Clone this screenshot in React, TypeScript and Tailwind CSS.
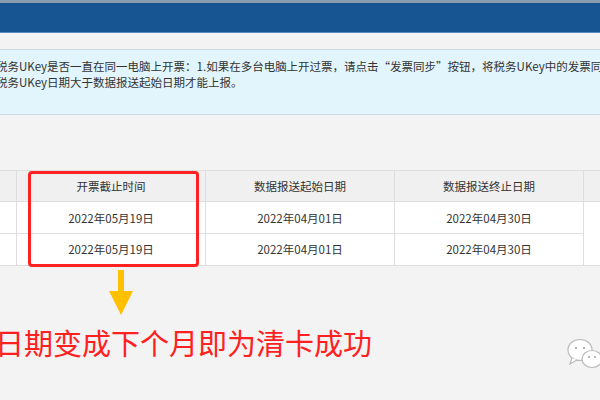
export default function App() {
  const font = { fontFamily: '"Noto Sans CJK SC", "Liberation Sans", sans-serif' };
  const cols = ["开票截止时间", "数据报送起始日期", "数据报送终止日期"];
  const rows = [
    ["2022年05月19日", "2022年04月01日", "2022年04月30日"],
    ["2022年05月19日", "2022年04月01日", "2022年04月30日"],
  ];
  return (
    <div className="w-[600px] h-[400px] overflow-hidden bg-[#f3f3f3] relative" style={font}>
      <div className="h-[3px] bg-[#8a9bb0]" />
      <div className="h-[30px] bg-[#175592] border-b border-[#5b8abd]" />
      <div className="h-[16px]" />
      <div className="h-[66px] bg-[#e2f5fc] border-y border-[#c7dbe8] pt-[8px] text-[11.5px] leading-[16px] text-[#333] whitespace-nowrap -ml-[4px]">
        <div>税务UKey是否一直在同一电脑上开票：1.如果在多台电脑上开过票，请点击“发票同步”按钮，将税务UKey中的发票同步</div>
        <div>税务UKey日期大于数据报送起始日期才能上报。</div>
      </div>
      <div className="h-[55px]" />
      <div className="flex -ml-[2px] bg-white">
        <div className="w-[19px] border border-[#dedede]">
          <div className="h-[31px] bg-[#f0f0f0] border-b border-[#dedede]" />
          <div className="h-[32px] border-b border-[#dedede]" />
          <div className="h-[31px]" />
        </div>
        {cols.map((c, i) => (
          <div key={c} className="w-[189px] border-y border-r border-[#dedede] text-[11.5px] text-[#333] text-center">
            <div className="h-[31px] leading-[31px] bg-[#f0f0f0] border-b border-[#dedede]">{c}</div>
            <div className="h-[32px] leading-[32px] border-b border-[#dedede]">{rows[0][i]}</div>
            <div className="h-[31px] leading-[31px]">{rows[1][i]}</div>
          </div>
        ))}
        <div className="flex-1 border-y border-[#dedede]">
          <div className="h-[31px] bg-[#f0f0f0] border-b border-[#dedede]" />
        </div>
      </div>
      <div className="absolute left-[28px] top-[171px] w-[171px] h-[96px] border-[3px] border-[#ff2222] rounded-[4px]" />
      <svg className="absolute left-[109px] top-[270px]" width="24" height="46" viewBox="0 0 24 46">
        <polygon points="9,0 15,0 15,21 24,21 12,45 0,21 9,21" fill="#ffc000" />
      </svg>
      <div className="absolute left-[-5px] top-[323px] text-[29px] leading-[38px] text-[#ff2020] whitespace-nowrap">
        日期变成下个月即为清卡成功
      </div>
      <svg className="absolute left-[566px] top-[337px]" width="36" height="34" viewBox="0 0 36 34">
        <ellipse cx="14" cy="13" rx="12" ry="10.5" fill="#fff" stroke="#bbb" strokeWidth="1.2" />
        <path d="M6 21 L4 27 L11 23" fill="#fff" stroke="#bbb" strokeWidth="1.2" />
        <circle cx="10" cy="11" r="1" fill="#999" />
        <circle cx="18" cy="11" r="1" fill="#999" />
        <ellipse cx="26" cy="22" rx="10" ry="8.5" fill="#fff" stroke="#bbb" strokeWidth="1.2" />
        <circle cx="23" cy="20" r="0.9" fill="#999" />
        <circle cx="29" cy="20" r="0.9" fill="#999" />
      </svg>
    </div>
  );
}
